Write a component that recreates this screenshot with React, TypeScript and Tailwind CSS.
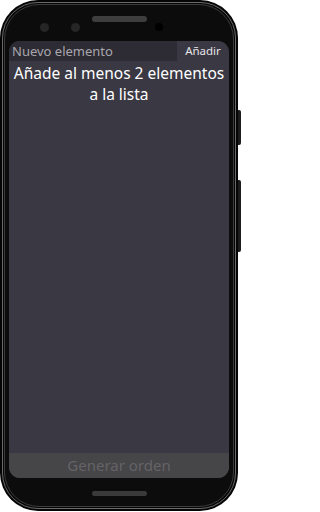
import React from "react";

export default function App() {
  return (
    <div className="w-[242px] h-[512px] bg-white relative overflow-hidden" style={{ fontFamily: '"Noto Sans", "Open Sans", sans-serif' }}>
      {/* side buttons */}
      <div className="absolute left-[238px] top-[110px] w-[3px] h-[35px] bg-[#1c1c1c] rounded-r-[2px]" />
      <div className="absolute left-[238px] top-[180px] w-[3px] h-[72px] bg-[#1c1c1c] rounded-r-[2px]" />

      <div className="w-[238px] h-[511px] rounded-[38px] bg-[#050505] p-[2px]">
        <div className="w-full h-full rounded-[36px] border border-[#6a6a6a] p-[1px]">
          <div className="w-full h-full rounded-[35px] border border-[#3c3c3c] bg-[#0c0c0c] relative flex flex-col">
            {/* top bezel */}
            <div className="h-[36px] shrink-0 relative">
              <div className="absolute left-[35px] top-[18px] w-[9px] h-[9px] rounded-full bg-[#262626]" />
              <div className="absolute left-[66px] top-[18px] w-[9px] h-[9px] rounded-full bg-[#262626]" />
              <div className="absolute left-[87px] top-[11px] w-[55px] h-[6px] rounded-full bg-[#3e3e3e]" />
              <div className="absolute left-[150px] top-[18px] w-[8px] h-[8px] rounded-full bg-[#000]" />
            </div>

            {/* screen */}
            <div className="ml-[4px] mr-[3px] w-[220px] h-[437px] rounded-[11px] overflow-hidden bg-[#3a3843] flex flex-col">
              <div className="h-[20px] flex shrink-0">
                <div className="flex-1 bg-[#2d2b33] flex items-center pl-[3px] text-[13px] leading-none text-[#a9a7ae] whitespace-nowrap">Nuevo elemento</div>
                <div className="w-[52px] flex items-center justify-center text-[11.5px] leading-none text-[#e6e5e8]">Añadir</div>
              </div>
              <div className="flex-1 pt-[2px] text-center text-[15.5px] leading-[21px] text-white whitespace-nowrap">
                Añade al menos 2 elementos
                <br />
                a la lista
              </div>
              <div className="h-[25px] shrink-0 bg-[#464548] flex items-center justify-center text-[15px] text-[#646367]">Generar orden</div>
            </div>

            {/* bottom bezel */}
            <div className="flex-1 flex items-center justify-center">
              <div className="w-[55px] h-[5px] rounded-full bg-[#3a3a3a] mt-[2px]" />
            </div>
          </div>
        </div>
      </div>
    </div>
  );
}
